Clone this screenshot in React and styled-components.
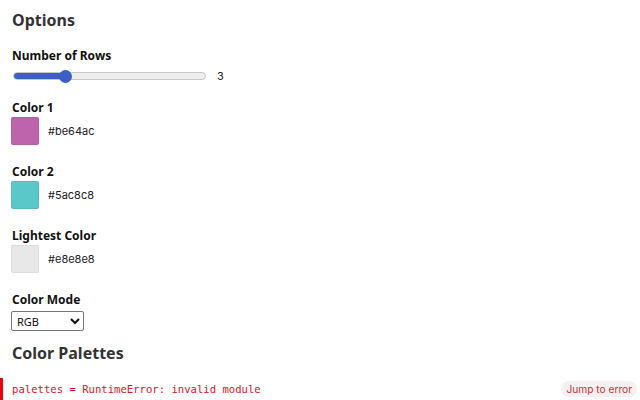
import React from "react";
import styled, { createGlobalStyle } from "styled-components";

const Global = createGlobalStyle`
  html, body { margin: 0; padding: 0; background: #fff; }
  body { font-family: "Noto Sans", sans-serif; color: #1b1e23; }
`;

const Page = styled.div`
  width: 640px;
  height: 400px;
  overflow: hidden;
  display: flex;
  flex-direction: column;
`;

const Cells = styled.div`
  padding: 0 12px;
  display: flex;
  flex-direction: column;
`;

const Heading = styled.h2`
  margin: ${(p) => p.$top}px 0 0;
  font-size: 16px;
  line-height: 20px;
  font-weight: 700;
  color: #333;
`;

const Field = styled.div`
  margin-top: ${(p) => p.$top}px;
  display: flex;
  flex-direction: column;
  align-items: flex-start;
`;

const Label = styled.div`
  font-size: 12px;
  line-height: 15px;
  font-weight: 700;
  color: #111;
`;

const SliderRow = styled.div`
  display: flex;
  align-items: center;
  gap: 11px;
  margin-top: 5px;
  height: 16px;
`;

const Range = styled.input`
  -webkit-appearance: none;
  appearance: none;
  margin: 0 0 0 1px;
  width: 193px;
  height: 8px;
  border-radius: 4px;
  border: 1px solid #c8c8c8;
  box-sizing: border-box;
  background: linear-gradient(to right, #3b5fc4 0%, #3b5fc4 ${(p) => p.$pct}%, #eeeeee ${(p) => p.$pct}%, #eeeeee 100%);
  outline: none;
  &::-webkit-slider-thumb {
    -webkit-appearance: none;
    width: 13px;
    height: 13px;
    border-radius: 50%;
    background: #3b5fc4;
    border: none;
  }
`;

const Value = styled.span`
  font-family: "Inter", sans-serif;
  font-size: 11px;
  color: #222;
`;

const SwatchRow = styled.div`
  display: flex;
  align-items: center;
  gap: 9px;
  margin: 2px 0 0 -1px;
`;

const Swatch = styled.div`
  width: 28px;
  height: 28px;
  border-radius: 2px;
  background: ${(p) => p.$color};
  box-shadow: inset 0 0 0 1px rgba(0,0,0,0.05);
`;

const Hex = styled.span`
  font-family: "Inter", sans-serif;
  font-size: 11px;
  color: #222;
`;

const Select = styled.select`
  margin: 4px 0 0 -1px;
  width: 73px;
  height: 20px;
  font-family: "Noto Sans", sans-serif;
  font-size: 11px;
  padding: 0 1px;
  border: 1px solid #767676;
  border-radius: 2px;
  background: #fff;
  color: #111;
`;

const ErrorBar = styled.div`
  margin-top: 15px;
  display: flex;
  align-items: center;
  justify-content: space-between;
  height: 22px;
  border-left: 3px solid #e7040f;
  padding: 0 3px 0 9px;
`;

const ErrorText = styled.span`
  font-family: "DejaVu Sans Mono", monospace;
  font-size: 10.6px;
  color: #e3102a;
`;

const JumpButton = styled.button`
  font-family: "Inter", sans-serif;
  font-size: 10.2px;
  line-height: 16px;
  color: #d0303a;
  background: #f6f1f1;
  border: none;
  border-radius: 8px;
  padding: 0 5px;
  height: 16px;
`;

const colors = [
  { label: "Color 1", hex: "#be64ac", top: 16 },
  { label: "Color 2", hex: "#5ac8c8", top: 19 },
  { label: "Lightest Color", hex: "#e8e8e8", top: 19 },
];

export default function App() {
  const min = 1, max = 9, value = 3;
  const pct = ((value - min) / (max - min)) * 100;
  return (
    <Page>
      <Global />
      <Cells>
        <Heading $top={10}>Options</Heading>
        <Field $top={18}>
          <Label>Number of Rows</Label>
          <SliderRow>
            <Range type="range" min={min} max={max} step={1} defaultValue={value} $pct={pct} />
            <Value>{value}</Value>
          </SliderRow>
        </Field>
        {colors.map((c) => (
          <Field key={c.label} $top={c.top}>
            <Label>{c.label}</Label>
            <SwatchRow>
              <Swatch $color={c.hex} />
              <Hex>{c.hex}</Hex>
            </SwatchRow>
          </Field>
        ))}
        <Field $top={19}>
          <Label>Color Mode</Label>
          <Select defaultValue="RGB">
            <option>RGB</option>
            <option>HSL</option>
            <option>Lab</option>
          </Select>
        </Field>
        <Heading $top={12}>Color Palettes</Heading>
      </Cells>
      <ErrorBar>
        <ErrorText>palettes = RuntimeError: invalid module</ErrorText>
        <JumpButton>Jump to error</JumpButton>
      </ErrorBar>
    </Page>
  );
}
